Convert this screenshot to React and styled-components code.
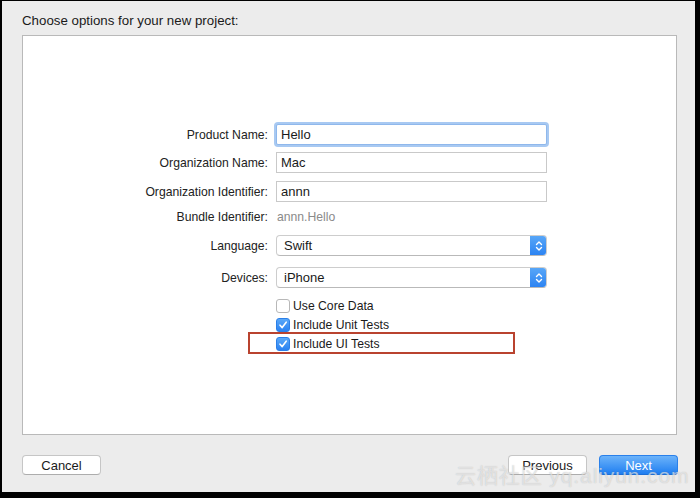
import React from 'react';
import styled, { createGlobalStyle } from 'styled-components';

const Global = createGlobalStyle`
  html, body { margin: 0; padding: 0; background: #000; }
  body { font-family: "Liberation Sans", Arial, sans-serif; }
`;

const App = () => {
  return (
    <Screen>
      <Global />
      <Window>
        <Title>Choose options for your new project:</Title>
        <Panel>
          <Form>
            <Row $top={0}>
              <Label>Product Name:</Label>
              <Field $focused>Hello</Field>
            </Row>
            <Row $top={7}>
              <Label>Organization Name:</Label>
              <Field>Mac</Field>
            </Row>
            <Row $top={8}>
              <Label>Organization Identifier:</Label>
              <Field>annn</Field>
            </Row>
            <Row $top={6} $h={18}>
              <Label>Bundle Identifier:</Label>
              <Static>annn.Hello</Static>
            </Row>
            <Row $top={9}>
              <Label>Language:</Label>
              <Popup>
                <span>Swift</span>
                <Stepper><Arrows /></Stepper>
              </Popup>
            </Row>
            <Row $top={11}>
              <Label>Devices:</Label>
              <Popup>
                <span>iPhone</span>
                <Stepper><Arrows /></Stepper>
              </Popup>
            </Row>
            <Row $top={9} $h={17}>
              <span />
              <Check label="Use Core Data" />
            </Row>
            <Row $top={2} $h={17}>
              <span />
              <Check checked label="Include Unit Tests" />
            </Row>
            <Row $top={2} $h={17} $marked>
              <span />
              <Check checked label="Include UI Tests" />
            </Row>
          </Form>
        </Panel>
        <Footer>
          <Button>Cancel</Button>
          <Right>
            <Button>Previous</Button>
            <Button $primary>Next</Button>
          </Right>
        </Footer>
        <Watermark>云栖社区 yq.aliyun.com</Watermark>
      </Window>
    </Screen>
  );
};

const Arrows = () => (
  <svg width="8" height="12" viewBox="0 0 8 12">
    <path d="M1.5 4.5 L4 2 L6.5 4.5 M1.5 7.5 L4 10 L6.5 7.5" fill="none" stroke="#fff" strokeWidth="1.4" strokeLinecap="round" strokeLinejoin="round" />
  </svg>
);

const Check = ({ checked, label }) => (
  <CheckRow>
    <Box $checked={checked}>
      {checked && (
        <svg width="10" height="10" viewBox="0 0 10 10">
          <path d="M2 5.2 L4.2 7.6 L8.2 2.2" fill="none" stroke="#fff" strokeWidth="1.6" strokeLinecap="round" strokeLinejoin="round" />
        </svg>
      )}
    </Box>
    <span>{label}</span>
  </CheckRow>
);

const Screen = styled.div`
  width: 700px;
  height: 498px;
  background: #000;
  overflow: hidden;
`;

const Window = styled.div`
  position: relative;
  margin: 1px 5px 0 2px;
  width: 693px;
  height: 491px;
  background: #ececec;
  box-sizing: border-box;
  padding: 12px 16px 0 20px;
  display: flex;
  flex-direction: column;
`;

const Title = styled.div`
  font-size: 13.3px;
  color: #1a1a1a;
  height: 22px;
`;

const Panel = styled.div`
  width: 655px;
  height: 400px;
  box-sizing: border-box;
  background: #fff;
  border: 1px solid #b9b9b9;
  padding-top: 88px;
`;

const Form = styled.div`
  display: flex;
  flex-direction: column;
`;

const Row = styled.div`
  position: relative;
  display: grid;
  grid-template-columns: 245px 271px;
  column-gap: 8px;
  align-items: center;
  height: ${p => p.$h || 21}px;
  margin-top: ${p => p.$top}px;

  ${p => p.$marked && `
    &::after {
      content: '';
      position: absolute;
      left: 225px;
      top: -3px;
      width: 263px;
      height: 18px;
      border: 2px solid #b9432f;
      pointer-events: none;
    }
  `}
`;

const Label = styled.div`
  text-align: right;
  font-size: 12.2px;
  color: #222;
`;

const Field = styled.div`
  height: 21px;
  box-sizing: border-box;
  border: 1px solid ${p => (p.$focused ? '#8fb8ec' : '#c9c9c9')};
  box-shadow: ${p => (p.$focused ? '0 0 0 2px #a8c9f2' : 'none')};
  border-radius: ${p => (p.$focused ? '2px' : '0')};
  padding: 0 4px;
  font-size: 13px;
  line-height: 19px;
  color: #1a1a1a;
  background: #fff;
`;

const Static = styled.div`
  font-size: 12.2px;
  color: #8a8a8a;
  padding-left: 1px;
`;

const Popup = styled.div`
  height: 21px;
  box-sizing: border-box;
  border: 1px solid #cdcdcd;
  border-bottom-color: #b9b9b9;
  border-radius: 4px;
  display: flex;
  align-items: center;
  justify-content: space-between;
  padding-left: 7px;
  font-size: 13px;
  color: #1a1a1a;
  overflow: hidden;
  background: #fff;
`;

const Stepper = styled.div`
  width: 17px;
  height: 21px;
  margin-right: -1px;
  display: flex;
  align-items: center;
  justify-content: center;
  background: linear-gradient(#5aa8f8, #2a82f2);
`;

const CheckRow = styled.label`
  display: flex;
  align-items: center;
  gap: 3px;
  font-size: 12.2px;
  color: #1a1a1a;
`;

const Box = styled.span`
  width: 14px;
  height: 14px;
  box-sizing: border-box;
  border-radius: 3px;
  display: flex;
  align-items: center;
  justify-content: center;
  background: ${p => (p.$checked ? 'linear-gradient(#5aa8f8, #2a82f2)' : '#fff')};
  border: 1px solid ${p => (p.$checked ? '#2b7fe8' : '#b8b8b8')};
`;

const Footer = styled.div`
  display: flex;
  justify-content: space-between;
  align-items: center;
  margin-top: 20px;
  width: 656px;
`;

const Right = styled.div`
  display: flex;
  gap: 12px;
`;

const Button = styled.div`
  width: 79px;
  height: 20px;
  box-sizing: border-box;
  border-radius: 4px;
  display: flex;
  align-items: center;
  justify-content: center;
  font-size: 13px;
  color: ${p => (p.$primary ? '#fff' : '#1a1a1a')};
  background: ${p => (p.$primary ? 'linear-gradient(#6cb3fa, #1f7ef1)' : '#fff')};
  border: 1px solid ${p => (p.$primary ? '#2a80ea' : '#c6c6c6')};
  border-bottom-color: ${p => (p.$primary ? '#1b6fd8' : '#adadad')};
`;

const Watermark = styled.div`
  position: absolute;
  left: 453px;
  top: 458px;
  font-family: "Liberation Sans", "Noto Sans CJK SC", sans-serif;
  font-size: 21px;
  letter-spacing: 0.9px;
  color: rgba(255, 255, 255, 0.55);
  text-shadow: 0 0 1px rgba(120, 120, 120, 0.45);
  pointer-events: none;
  white-space: nowrap;
`;

export default App;
